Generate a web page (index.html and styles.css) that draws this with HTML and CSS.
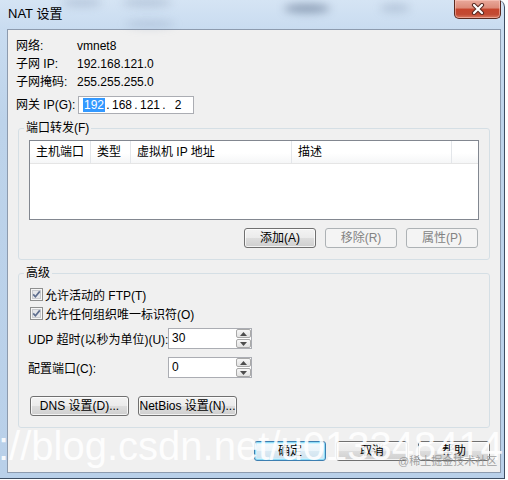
FILE: index.html
```html
<!DOCTYPE html>
<html lang="zh-CN">
<head>
<meta charset="utf-8">
<title>NAT 设置</title>
<link rel="stylesheet" href="styles.css">
</head>
<body>
<div class="window">
  <div class="blob b1"></div>
  <div class="blob b2"></div>
  <div class="blob b3"></div>
  <div class="blob b4"></div>
  <div class="blob b5"></div>
  <div class="titlebar">
    <span class="title">NAT 设置</span>
    <button class="close" aria-label="关闭">
      <svg width="16" height="12" viewBox="0 0 16 12">
        <path d="M4 2 L12 10 M12 2 L4 10" stroke="#5a2a22" stroke-width="4.2" stroke-linecap="round" fill="none"/>
        <path d="M4 2 L12 10 M12 2 L4 10" stroke="#ffffff" stroke-width="2.2" stroke-linecap="round" fill="none"/>
      </svg>
    </button>
  </div>
  <div class="client">
    <div class="info">
      <div class="row"><span class="lbl">网络:</span><span>vmnet8</span></div>
      <div class="row"><span class="lbl">子网 IP:</span><span>192.168.121.0</span></div>
      <div class="row"><span class="lbl">子网掩码:</span><span>255.255.255.0</span></div>
      <div class="row gw">
        <span class="lbl">网关 IP(G):</span>
        <div class="ipbox">
          <span class="oct"><span class="sel">192</span></span><span class="dot">.</span><span class="oct">168</span><span class="dot">.</span><span class="oct">121</span><span class="dot">.</span><span class="oct">2</span>
        </div>
      </div>
    </div>

    <fieldset class="group g1">
      <legend>端口转发(F)</legend>
      <div class="list">
        <div class="lhead">
          <span class="col c1">主机端口</span>
          <span class="col c2">类型</span>
          <span class="col c3">虚拟机 IP 地址</span>
          <span class="col c4">描述</span>
          <span class="col c5"></span>
        </div>
      </div>
      <div class="btnrow">
        <button class="btn">添加(A)</button>
        <button class="btn" disabled>移除(R)</button>
        <button class="btn" disabled>属性(P)</button>
      </div>
    </fieldset>

    <fieldset class="group g2">
      <legend>高级</legend>
      <div class="chk">
        <svg class="cb" width="13" height="13" viewBox="0 0 13 13"><rect x="0.5" y="0.5" width="12" height="12" fill="#f6f6f6" stroke="#8e8f8f"/><rect x="2.5" y="2.5" width="8" height="8" fill="#e6e7ea" stroke="#c9cbcf"/><path d="M3.2 6.4 L5.4 8.8 L9.8 3.4" fill="none" stroke="#5f6f8f" stroke-width="1.7"/></svg>
        <span>允许活动的 FTP(T)</span>
      </div>
      <div class="chk">
        <svg class="cb" width="13" height="13" viewBox="0 0 13 13"><rect x="0.5" y="0.5" width="12" height="12" fill="#f6f6f6" stroke="#8e8f8f"/><rect x="2.5" y="2.5" width="8" height="8" fill="#e6e7ea" stroke="#c9cbcf"/><path d="M3.2 6.4 L5.4 8.8 L9.8 3.4" fill="none" stroke="#5f6f8f" stroke-width="1.7"/></svg>
        <span>允许任何组织唯一标识符(O)</span>
      </div>
      <div class="field udp">
        <span class="flbl">UDP 超时(以秒为单位)(U):</span>
        <div class="spin">
          <span class="val">30</span>
          <span class="arrows">
            <span class="arr"><svg width="7" height="4" viewBox="0 0 7 4"><path d="M0 4 L3.5 0 L7 4 Z" fill="#4d4d4d"/></svg></span>
            <span class="arr"><svg width="7" height="4" viewBox="0 0 7 4"><path d="M0 0 L3.5 4 L7 0 Z" fill="#4d4d4d"/></svg></span>
          </span>
        </div>
      </div>
      <div class="field port">
        <span class="flbl">配置端口(C):</span>
        <div class="spin">
          <span class="val">0</span>
          <span class="arrows">
            <span class="arr"><svg width="7" height="4" viewBox="0 0 7 4"><path d="M0 4 L3.5 0 L7 4 Z" fill="#4d4d4d"/></svg></span>
            <span class="arr"><svg width="7" height="4" viewBox="0 0 7 4"><path d="M0 0 L3.5 4 L7 0 Z" fill="#4d4d4d"/></svg></span>
          </span>
        </div>
      </div>
      <div class="setrow">
        <button class="btn wide">DNS 设置(D)...</button>
        <button class="btn wide">NetBios 设置(N)...</button>
      </div>
    </fieldset>

    <div class="dlgrow">
      <button class="btn default">确定</button>
      <button class="btn">取消</button>
      <button class="btn">帮助</button>
    </div>
  </div>
  <div class="wm">://blog.csdn.net/u013348414</div>
  <div class="wm2">@稀土掘金技术社区</div>
</div>
</body>
</html>
```
FILE: styles.css
```css
* { box-sizing: border-box; }
html, body { margin: 0; padding: 0; background: #ffffff; }
body {
  font-family: "Liberation Sans", "Noto Sans CJK SC", sans-serif;
  font-size: 12px;
  color: #000;
}

.window {
  position: relative;
  width: 505px;
  height: 479px;
  padding-left: 7px;
  background: linear-gradient(180deg, #d5e4f4 0px, #c9dcf0 28px, #bdd3ea 120px, #b9d0e9 100%);
  border-right: 1px solid #3e4e63;
  border-bottom: 1px solid #3e4e63;
  border-top-right-radius: 7px;
  overflow: hidden;
}

.blob {
  position: absolute;
  border-radius: 50%;
  filter: blur(4px);
  background: rgba(70, 90, 120, 0.35);
}
.b1 { left: 62px; top: -2px; width: 40px; height: 9px; background: rgba(120, 140, 170, 0.3); }
.b2 { left: 122px; top: -2px; width: 50px; height: 9px; background: rgba(120, 140, 170, 0.3); }
.b3 { left: 125px; top: 20px; width: 50px; height: 8px; background: rgba(120, 140, 170, 0.25); }
.b4 { left: 284px; top: 4px; width: 46px; height: 9px; background: rgba(60, 80, 110, 0.45); }
.b5 { left: 380px; top: 4px; width: 30px; height: 8px; background: rgba(110, 130, 160, 0.3); }

.titlebar {
  position: relative;
  height: 29px;
  display: flex;
  align-items: center;
}
.title {
  margin-left: 1px;
  margin-top: -1px;
  font-size: 13px;
  line-height: 16px;
  color: #000;
}
.close {
  margin-left: auto;
  margin-right: 3px;
  align-self: flex-start;
  width: 47px;
  height: 19px;
  padding: 0;
  border: 1px solid #5b2a20;
  border-top: none;
  border-radius: 0 0 5px 5px;
  background: linear-gradient(180deg, #e9a99b 0%, #dc8a78 45%, #c6452d 50%, #c24a33 80%, #d97a62 100%);
  box-shadow: inset 0 0 0 1px rgba(255, 210, 200, 0.5);
  display: flex;
  align-items: center;
  justify-content: center;
}

.client {
  width: 494px;
  height: 444px;
  border: 1px solid #8d9bae;
  background: #f0f0f0;
}

.info { padding: 7px 0 0 8px; }
.row {
  display: flex;
  align-items: center;
  height: 18px;
  line-height: 18px;
}
.lbl { width: 61px; }
.gw { margin-top: 5px; }
.ipbox {
  width: 116px;
  height: 18px;
  margin-left: 1px;
  border: 1px solid #abadb3;
  background: #fff;
  display: flex;
  align-items: center;
  padding-left: 4px;
  line-height: 15px;
}
.oct { width: 22px; text-align: center; }
.dot { width: 6px; text-align: center; }
.sel { background: #3399ff; color: #fff; padding: 0 1px; }

.group {
  margin: 7px 10px 0 10px;
  padding: 0;
  border: 1px solid #d5dfe5;
  border-radius: 3px;
  min-width: 0;
}
.group legend {
  margin-left: 5px;
  padding: 0 2px;
  line-height: 14px;
}
.g2 { margin-top: 6px; }

.list {
  margin: 5px 10px 0 10px;
  height: 80px;
  border: 1px solid #828790;
  background: #fff;
}
.lhead {
  display: flex;
  height: 23px;
  border-bottom: 1px solid #e5e5e5;
  background: linear-gradient(180deg, #ffffff 0%, #ffffff 55%, #f5f6f7 100%);
}
.col {
  height: 100%;
  padding-left: 6px;
  line-height: 22px;
  border-right: 1px solid #e3e6ea;
  white-space: nowrap;
}
.c1 { width: 61px; }
.c2 { width: 40px; }
.c3 { width: 161px; }
.c4 { width: 160px; }
.c5 { flex: 1; border-right: none; }

.btnrow {
  display: flex;
  justify-content: flex-end;
  gap: 9px;
  margin: 8px 11px 11px 0;
}

.btn {
  width: 72px;
  height: 20px;
  padding: 0;
  border: 1px solid #707070;
  border-radius: 3px;
  background: linear-gradient(180deg, #f3f3f3 0%, #ebebeb 50%, #dddddd 51%, #cfcfcf 100%);
  box-shadow: inset 0 0 0 1px rgba(255, 255, 255, 0.75);
  font-family: inherit;
  font-size: 12px;
  line-height: 16px;
  color: #000;
}
.btn:disabled {
  border-color: #adb2b5;
  background: #f4f4f4;
  box-shadow: none;
  color: #838383;
}
.btn.wide { width: 99px; height: 20px; }
.btn.default {
  border-color: #3c7fb1;
  box-shadow: inset 0 0 0 1px #8fdcf6, inset 0 0 0 2px rgba(200, 240, 255, 0.8);
  background: linear-gradient(180deg, #f4fafd 0%, #eaf4fa 50%, #dbeaf3 51%, #cfe2ee 100%);
}

.chk {
  display: flex;
  align-items: center;
  height: 19px;
  padding-left: 11px;
}
.chk:first-of-type { margin-top: 5px; }
.cb { margin-right: 2px; flex: none; }

.field {
  display: flex;
  align-items: center;
  padding-left: 9px;
  height: 21px;
}
.udp { margin-top: 5px; }
.port { margin-top: 8px; }
.flbl { width: 140px; white-space: nowrap; }
.spin {
  width: 84px;
  height: 21px;
  border: 1px solid #abadb3;
  background: #fff;
  display: flex;
  padding: 0 0 0 3px;
}
.val { flex: 1; line-height: 17px; padding-top: 1px; }
.arrows {
  display: flex;
  flex-direction: column;
  gap: 1px;
  width: 15px;
  margin-right: 0;
}
.arr {
  height: 9px;
  border: 1px solid #a9a9a9;
  border-radius: 2px;
  background: linear-gradient(180deg, #f7f7f7 0%, #e2e2e2 100%);
  display: flex;
  align-items: center;
  justify-content: center;
}

.setrow {
  display: flex;
  gap: 9px;
  margin: 18px 0 11px 11px;
}

.dlgrow {
  display: flex;
  justify-content: flex-end;
  gap: 10px;
  margin: 13px 10px 0 0;
}

.wm {
  position: absolute;
  left: -2px;
  top: 426px;
  font-family: "Liberation Sans", sans-serif;
  font-size: 40px;
  line-height: 40px;
  color: rgba(255, 255, 255, 0.88);
  white-space: nowrap;
  pointer-events: none;
}
.wm2 {
  position: absolute;
  left: 398px;
  top: 454px;
  font-size: 11px;
  line-height: 14px;
  color: rgba(150, 150, 150, 0.9);
  white-space: nowrap;
  pointer-events: none;
}
```
